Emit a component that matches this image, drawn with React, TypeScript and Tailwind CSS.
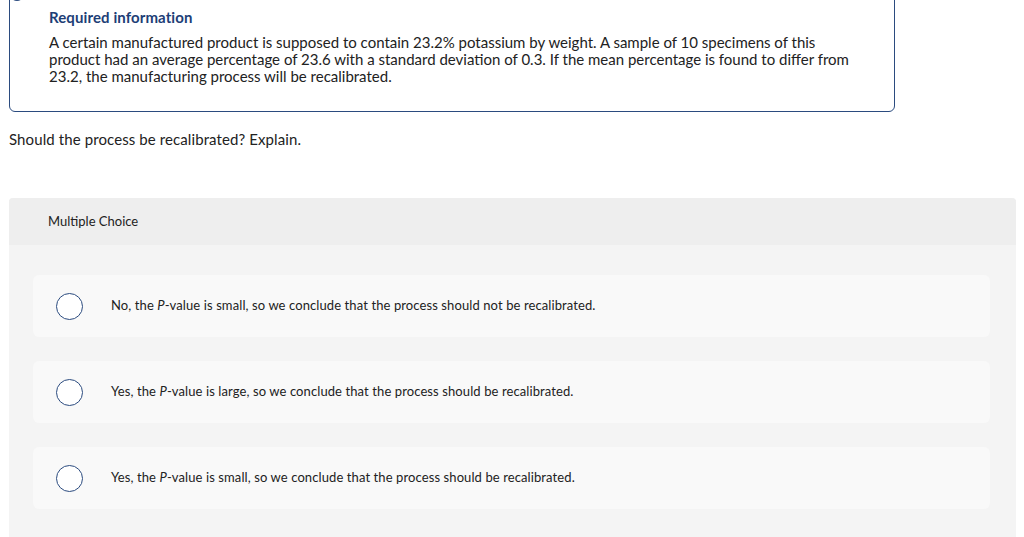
const options = [
  { lead: "No, the ", tail: "-value is small, so we conclude that the process should not be recalibrated." },
  { lead: "Yes, the ", tail: "-value is large, so we conclude that the process should be recalibrated." },
  { lead: "Yes, the ", tail: "-value is small, so we conclude that the process should be recalibrated." },
];

export default function App() {
  return (
    <div
      className="min-h-[537px] overflow-hidden bg-white text-[#222]"
      style={{ fontFamily: "Lato, 'Open Sans', sans-serif" }}
    >
      <div className="relative ml-[9px] mt-[-20px] w-[886px] rounded-md border border-[#2b4b7f] pb-[26px] pl-[39px] pr-[20px] pt-[27px]">
        <span className="absolute left-[0px] top-[6px] h-[14px] w-[14px] rounded-full bg-[#2b4b7f]" />
        <h2 className="text-[15px] font-bold leading-[18px] tracking-[0.1px] text-[#1d3e76]">Required information</h2>
        <p className="mt-[8px] text-[15px] leading-[17px]">
          A certain manufactured product is supposed to contain 23.2% potassium by weight. A sample of 10 specimens of this
          <br />
          product had an average percentage of 23.6 with a standard deviation of 0.3. If the mean percentage is found to differ from
          <br />
          23.2, the manufacturing process will be recalibrated.
        </p>
      </div>

      <p className="ml-[9px] mt-[18px] text-[15px] leading-[18px] tracking-[0.1px]">
        Should the process be recalibrated? Explain.
      </p>

      <div className="ml-[9px] mt-[50px] w-[1007px] rounded-t-sm bg-[#f4f4f4] pb-[28px]">
        <div className="flex h-[47px] items-center rounded-t-sm bg-[#eeeeee] pl-[39px] text-[13px]">Multiple Choice</div>
        <div className="flex flex-col gap-[24px] px-[24px] pt-[30px]">
          {options.map((o, i) => (
            <div key={i} className="flex h-[62px] w-[957px] items-center rounded-md bg-[#f9f9f9]">
              <span className="ml-[23px] h-[27px] w-[27px] shrink-0 rounded-full border-[1.5px] border-[#2b4b7f] bg-white" />
              <span className="ml-[28px] text-[13px] tracking-[0.1px]">
                {o.lead}
                <i>P</i>
                {o.tail}
              </span>
            </div>
          ))}
        </div>
      </div>
    </div>
  );
}
